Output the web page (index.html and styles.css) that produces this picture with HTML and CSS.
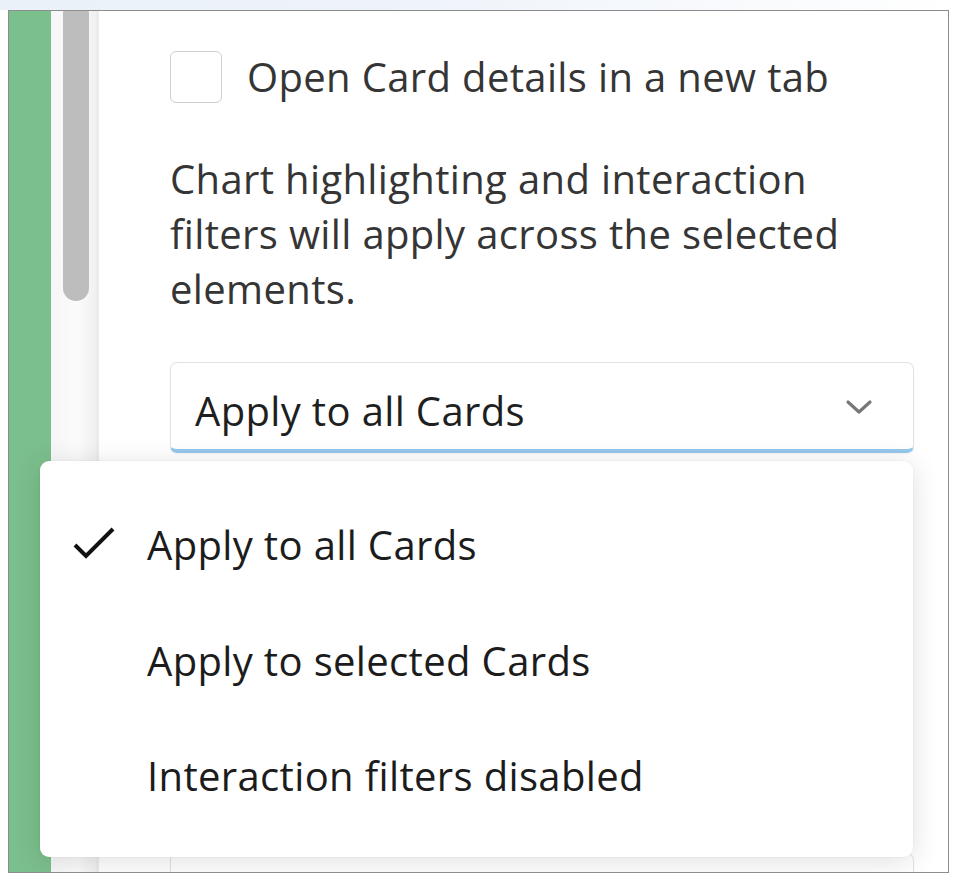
FILE: index.html
```html
<!DOCTYPE html>
<html lang="en">
<head>
<meta charset="utf-8">
<title>Interaction filters</title>
<link rel="stylesheet" href="styles.css">
</head>
<body>
<div class="topband"></div>
<div class="frame">
  <div class="green"></div>
  <div class="gutter"><div class="thumb"></div></div>
  <div class="panel">
    <label class="check-row">
      <span class="checkbox"></span>
      <span class="check-label">Open Card details in a new tab</span>
    </label>
    <p class="desc">Chart highlighting and interaction filters will apply across the selected elements.</p>
    <div class="select">
      <span class="select-value">Apply to all Cards</span>
      <svg class="chevron" width="28" height="18" viewBox="0 0 28 18"><path d="M3 4 L14 14 L25 4" fill="none" stroke="#777" stroke-width="3.2" stroke-linecap="round" stroke-linejoin="round"/></svg>
    </div>
    <div class="select next"></div>
  </div>
  <div class="menu">
    <div class="item selected">
      <svg class="check" width="44" height="36" viewBox="0 0 44 36"><path d="M3 20 L14 31 L41 4" fill="none" stroke="#111" stroke-width="4"/></svg>
      <span>Apply to all Cards</span>
    </div>
    <div class="item"><span>Apply to selected Cards</span></div>
    <div class="item"><span>Interaction filters disabled</span></div>
  </div>
</div>
</body>
</html>
```
FILE: styles.css
```css
html, body {
  margin: 0;
  padding: 0;
  background: #ffffff;
  font-family: "Open Sans", "Noto Sans", sans-serif;
}
.topband {
  height: 10px;
  background: linear-gradient(90deg, #eaf1f9 0%, #eef3fa 40%, #ffffff 100%);
}
.frame {
  position: relative;
  margin-left: 8px;
  width: 939px;
  height: 861px;
  border: 1px solid #8c8c8c;
  display: flex;
  overflow: hidden;
  background: #ffffff;
}
.green {
  width: 42px;
  flex: none;
  background: #7bbf8c;
}
.gutter {
  flex: none;
  background: linear-gradient(90deg, #f6f6f6, #fbfbfb 60%, #f0f0f0);
  border-right: 3px solid #ececec;
  padding-left: 12px;
  width: 33px;
}
.thumb {
  width: 26px;
  height: 300px;
  margin-top: -10px;
  background: #bdbdbd;
  border-radius: 13px;
}
.panel {
  flex: 1;
  padding: 38px 34px 0 71px;
  color: #383838;
  letter-spacing: 0.35px;
}
.check-row {
  display: flex;
  align-items: center;
  gap: 25px;
}
.checkbox {
  width: 50px;
  height: 50px;
  border: 1px solid #cfcfcf;
  border-radius: 6px;
  background: #fff;
  flex: none;
}
.check-label {
  font-size: 40px;
  color: #353535;
}
.desc {
  margin: 47px 0 0;
  font-size: 40px;
  line-height: 55px;
  width: 680px;
  color: #353535;
}
.select {
  box-sizing: border-box;
  margin-top: 46px;
  height: 91px;
  border: 1px solid #e3e3e3;
  border-bottom: 4px solid #95c8ec;
  border-radius: 7px;
  display: flex;
  align-items: center;
  justify-content: space-between;
  padding: 8px 40px 0 24px;
  box-shadow: 0 1px 2px rgba(0,0,0,0.05);
}
.select-value {
  font-size: 40px;
  color: #1f1f1f;
}
.chevron {
  margin-top: -6px;
}
.select.next {
  margin-top: 400px;
  border-bottom: 1px solid #e3e3e3;
}
.menu {
  position: absolute;
  left: 31px;
  top: 450px;
  width: 873px;
  height: 396px;
  background: #ffffff;
  border-radius: 9px;
  box-shadow: 0 4px 28px rgba(0,0,0,0.13), 0 0 2px rgba(0,0,0,0.08);
  padding-top: 26px;
  box-sizing: border-box;
  letter-spacing: 0.35px;
}
.item {
  position: relative;
  height: 115.5px;
  display: flex;
  align-items: center;
  padding-left: 107px;
  font-size: 40px;
  color: #1c1c1c;
}
.check {
  position: absolute;
  left: 32px;
  top: 50%;
  margin-top: -20px;
}
```
